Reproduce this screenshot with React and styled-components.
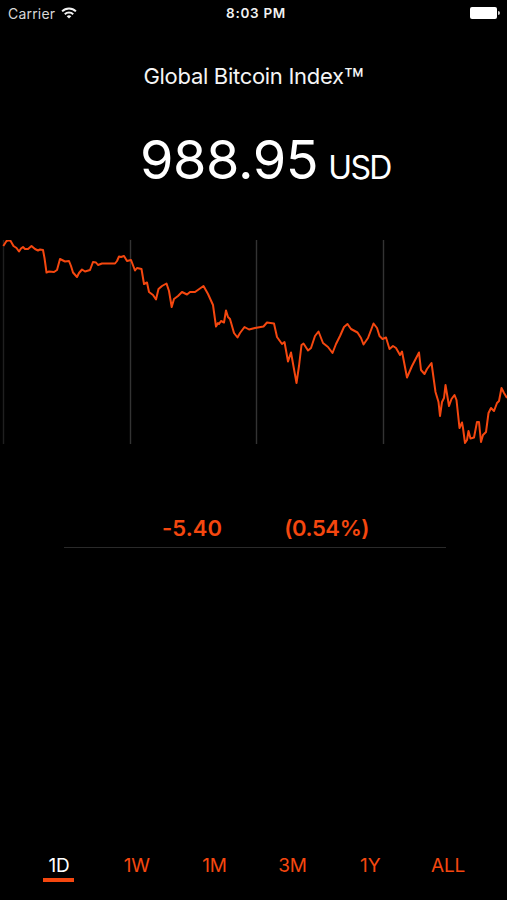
import { useState } from "react";
import styled, { createGlobalStyle } from "styled-components";

const RANGES = ["1D", "1W", "1M", "3M", "1Y", "ALL"];
const GRID = [3, 130, 256, 383];
const POINTS = `3.3,246 6.5,241 8.5,240.2 10.5,240.8 13.5,246 16.5,248 19,251.5 21,248.5 23,247 25,249 28,249
31.5,246 35,249 38,250.5 40,249.5 43,250 44.5,258 46.5,272.5 49,271.5 54,272 57,270 60,259 63,260.5 65,261.5
69,261 71,266 73,272.5 77,277 79,273 82,269.5 85,271.5 90,270 93,262 96,262.5 98,265 102,263.5 115,263.5
117,261 119,256.5 121,257 124,256 127,261 131,260 135,270.5 137,268 141.5,269 144,284 147,282.5 149,292
153,295 156,299.5 158.5,289 162,286 166.5,283.5 169,291 171.7,307 174,299 178,296 182,292 187,294.5 190,292
195,292 203.5,286 208,294 213,305 216,326.5 218,323 219,324 221,321 224,322.5 226,310.5 228,317 230,319
234,333 237.5,337.5 240,333 244.5,327 249,329.5 255,328 263.5,326.5 267,322.5 274,323.5 277,337 282,344
284.5,342 288,361.5 291,352.5 296.5,383 299,366 301.5,345 303.5,343.5 308,350.5 311,348 315,336 318.5,331.5
323,343 328,347 332.5,353 336,344 340,336 344,327 347.5,324 351,329 357.5,332.5 361,338 363.5,344.5 368,338
373.5,323.5 377,328 379.5,336 382.5,339 386,337.5 389.5,349 393,346 396,348 400,355 402,351.5 407,377.5
412,366 419,352.5 421,370 424.5,374 427,369 431.5,363 435.5,392 438.5,402 440,416 442,402 444,398 445.5,385
449,406 451.5,399 454.5,395 456.5,400 459.5,428 462,422.5 463,428 465,443 467,440 468.5,431 470.5,438.5
474,437.5 477,422 479,422 481,442 483,435 486,432 488.5,413 491,408 494,411 497,403 499,401 501.5,388
504,393 507,398`;

export default function App() {
    const [range, setRange] = useState("1D");

    return (
        <>
        <GlobalStyle/>
        <SCREEN>
            <STATUSBAR>
                <CARRIER>
                    Carrier
                    <svg width="16" height="12" viewBox="0 0 16 12" fill="none" stroke="#f2f2f2" strokeWidth="2">
                        <path d="M1.1 4.4a9.8 9.8 0 0 1 13.8 0"/>
                        <path d="M3.8 7.2a6 6 0 0 1 8.4 0"/>
                        <path d="M8 11.6L5.7 9.3a3.3 3.3 0 0 1 4.6 0z" fill="#f2f2f2" stroke="none"/>
                    </svg>
                </CARRIER>
                <TIME>8:03 PM</TIME>
                <BATTERY/>
            </STATUSBAR>
            <TITLE>Global Bitcoin Index<TRADEMARK>™</TRADEMARK></TITLE>
            <PRICE>
                <AMOUNT>988.95</AMOUNT>
                <CURRENCY>USD</CURRENCY>
            </PRICE>
            <CHART viewBox="0 240 507 204">
                {GRID.map((x) => (
                    <line key={x} x1={x + 0.5} x2={x + 0.5} y1="240" y2="444" stroke={x === 3 ? "#1f1f1f" : "#333333"} strokeWidth="1.4"/>
                ))}
                <polyline points={POINTS} fill="none" stroke="#f5470f" strokeWidth="2" strokeLinejoin="round"/>
            </CHART>
            <CHANGE>
                <DELTA>-5.40</DELTA>
                <DELTA $tight>(0.54%)</DELTA>
            </CHANGE>
            <TABS>
                {RANGES.map((item) => (
                    <TAB key={item} $active={item === range} onClick={() => setRange(item)}>{item}</TAB>
                ))}
            </TABS>
        </SCREEN>
        </>
    );
}

const GlobalStyle = createGlobalStyle`
    * {
        box-sizing: border-box;
    }
    body {
        margin: 0;
        background-color: #000000;
    }
`;
const SCREEN = styled.div`
    display: flex;
    flex-direction: column;
    width: 507px;
    height: 900px;
    overflow: hidden;
    color: #ffffff;
    background-color: #000000;
    font-family: Inter, "Liberation Sans", sans-serif;
`;
const STATUSBAR = styled.div`
    display: grid;
    grid-template-columns: 1fr auto 1fr;
    align-items: center;
    height: 26px;
    padding: 0 7px 0 8px;
    font-size: 14px;
    color: #f2f2f2;
`;
const CARRIER = styled.div`
    display: flex;
    align-items: center;
    gap: 6px;
    letter-spacing: 0.2px;
    color: #d8d8d8;
`;
const TIME = styled.div`
    padding-left: 4px;
    font-weight: 600;
    font-size: 13.5px;
    letter-spacing: 0.7px;
`;
const BATTERY = styled.div`
    display: flex;
    align-items: center;
    justify-content: flex-end;
    gap: 1px;
    &::before {
        content: "";
        width: 27px;
        height: 12px;
        border-radius: 2px;
        background-color: #ffffff;
    }
    &::after {
        content: "";
        width: 2px;
        height: 4px;
        border-radius: 0 2px 2px 0;
        background-color: #cccccc;
    }
`;
const TITLE = styled.div`
    height: 28px;
    margin-top: 36px;
    line-height: 28px;
    font-size: 22px;
    letter-spacing: -0.3px;
    text-align: center;
    color: #f5f5f5;
`;
const TRADEMARK = styled.span`
    font-size: 33px;
    line-height: 0;
    vertical-align: -8px;
`;
const PRICE = styled.div`
    display: flex;
    align-items: baseline;
    gap: 10px;
    height: 66px;
    margin: 37px 0 47px;
    padding-left: 140px;
    line-height: 66px;
`;
const AMOUNT = styled.div`
    font-size: 54px;
    letter-spacing: -0.4px;
`;
const CURRENCY = styled.div`
    font-size: 32px;
    font-weight: 400;
    letter-spacing: -1.6px;
`;
const CHART = styled.svg`
    display: block;
    flex-shrink: 0;
    width: 507px;
    height: 204px;
`;
const CHANGE = styled.div`
    display: flex;
    gap: 62px;
    width: 382px;
    height: 35px;
    margin: 69px 0 0 64px;
    padding-left: 98px;
    border-bottom: 1px solid #2a2a2a;
    line-height: 31px;
    font-size: 22px;
    font-weight: 600;
    color: #f5470f;
`;
const DELTA = styled.div`
    white-space: nowrap;
    letter-spacing: ${({ $tight }) => ($tight ? "-0.4px" : "0.1px")};
`;
const TABS = styled.div`
    display: flex;
    justify-content: space-between;
    margin: auto 20px 18px;
`;
const TAB = styled.button`
    display: flex;
    flex-direction: column;
    align-items: center;
    width: 78px;
    padding: 0;
    border: none;
    background: none;
    font-family: inherit;
    font-size: 19px;
    line-height: 27px;
    letter-spacing: -0.2px;
    color: ${({ $active }) => ($active ? "#ffffff" : "#f5470f")};
    &::after {
        content: "";
        width: 31px;
        height: 4px;
        margin-top: -1px;
        background-color: ${({ $active }) => ($active ? "#f5470f" : "transparent")};
    }
`;
